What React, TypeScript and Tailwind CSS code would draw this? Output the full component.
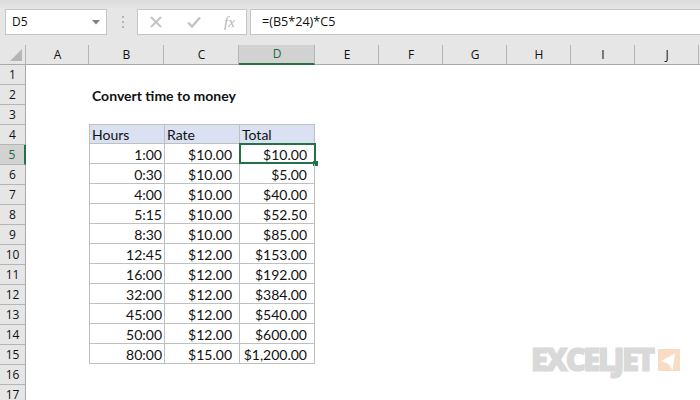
const cols = ["A", "B", "C", "D", "E", "F", "G", "H", "I", "J"];
const widths = ["w-[63px]", "w-[75px]", "w-[75px]", "w-[76px]", "w-[64px]", "w-[64px]", "w-[64px]", "w-[64px]", "w-[64px]", "w-[64px]"];
const rows: string[][] = [
  ["1:00", "$10.00", "$10.00"],
  ["0:30", "$10.00", "$5.00"],
  ["4:00", "$10.00", "$40.00"],
  ["5:15", "$10.00", "$52.50"],
  ["8:30", "$10.00", "$85.00"],
  ["12:45", "$12.00", "$153.00"],
  ["16:00", "$12.00", "$192.00"],
  ["32:00", "$12.00", "$384.00"],
  ["45:00", "$12.00", "$540.00"],
  ["50:00", "$12.00", "$600.00"],
  ["80:00", "$15.00", "$1,200.00"],
];
const rowNums = Array.from({ length: 17 }, (_, i) => i + 1);

export default function App() {
  return (
    <div className="relative w-[700px] h-[400px] overflow-hidden bg-white font-['Lato','Liberation_Sans',sans-serif] text-[14px] text-[#111]">
      {/* Formula bar area */}
      <div className="h-[45px] bg-[#e6e6e6] bg-gradient-to-b from-[#dcdcdc] to-[#e6e6e6] bg-[length:100%_9px] bg-no-repeat font-['Open_Sans',sans-serif] text-[12px]">
        <div className="flex h-[35px] pt-[9px]">
          <div className="ml-[5px] w-[102px] h-[26px] bg-white border border-[#c6c6c6] flex items-center justify-between pl-[6px] pr-[6px]">
            <span>D5</span>
            <svg width="8" height="5" viewBox="0 0 8 5"><path d="M0 0h8L4 4.5z" fill="#7f7f7f" /></svg>
          </div>
          <div className="w-[30px] flex flex-col items-center justify-center gap-[3px] pl-[1px]">
            <span className="w-[2px] h-[2px] bg-[#b5b5b5]" />
            <span className="w-[2px] h-[2px] bg-[#b5b5b5]" />
            <span className="w-[2px] h-[2px] bg-[#b5b5b5]" />
          </div>
          <div className="w-[110px] h-[26px] bg-white border border-[#c6c6c6] flex items-center pl-[12px]">
            <svg width="12" height="12" viewBox="0 0 12 12"><path d="M1 1l10 10M11 1L1 11" stroke="#c4c4c4" strokeWidth="2" fill="none" /></svg>
            <svg className="ml-[25px]" width="14" height="12" viewBox="0 0 14 12"><path d="M1 6.5l4 4 8-9" stroke="#c4c4c4" strokeWidth="2.4" fill="none" /></svg>
            <span className="ml-[23px] font-['Liberation_Serif',serif] italic text-[15px] text-[#b4b4b4]">fx</span>
          </div>
          <div className="ml-[3px] flex-1 h-[26px] bg-white border-y border-l border-[#c6c6c6] flex items-center pl-[11px] text-[12.6px]">
            =(B5*24)*C5
          </div>
        </div>
      </div>

      {/* Column headers */}
      <div className="flex h-[20px] bg-[#e6e6e6] border-b border-[#a9a9a9] font-['Open_Sans',sans-serif] text-[12px]">
        <div className="w-[26px] border-r border-[#b5b5b5] relative">
          <svg className="absolute left-[10px] top-[4px]" width="12" height="12" viewBox="0 0 12 12"><path d="M12 0v12H0z" fill="#b5b5b5" /></svg>
        </div>
        {cols.map((c, i) => (
          <div
            key={c}
            className={`${widths[i]} shrink-0 flex items-center justify-center pl-[1px] leading-none border-r border-[#b5b5b5] ${
              c === "D" ? "bg-[#d2d2d2] text-[#1d6b41] border-b-2 border-b-[#217346] h-[20px]" : ""
            }`}
          >
            {c}
          </div>
        ))}
      </div>

      {/* Sheet */}
      <div className="flex">
        <div className="w-[26px] shrink-0 font-['Open_Sans',sans-serif] text-[12px]">
          {rowNums.map((n) => (
            <div
              key={n}
              className={`h-[20px] pt-[1px] flex items-center justify-center leading-none border-b border-[#b5b5b5] ${
                n === 5
                  ? "bg-[#d2d2d2] text-[#1d6b41] border-r-2 border-r-[#217346]"
                  : "bg-[#e6e6e6] border-r border-r-[#a9a9a9]"
              }`}
            >
              {n}
            </div>
          ))}
        </div>
        <div className="flex-1">
          <div className="h-[20px]" />
          <div className="h-[20px] pt-[1px] pl-[66px] flex items-center font-bold">Convert time to money</div>
          <div className="h-[20px]" />
          <div className="ml-[63px] w-[226px] -mt-px">
            <div className="flex h-[20px] bg-[#d9e1f2] border-y border-[#bfbfbf]">
              {["Hours", "Rate", "Total"].map((h, i) => (
                <div
                  key={h}
                  className={`${i === 2 ? "w-[76px] border-r" : "w-[75px]"} pl-[2px] pt-[1px] flex items-center border-l border-[#bfbfbf]`}
                >
                  {h}
                </div>
              ))}
            </div>
            {rows.map((r, ri) => (
              <div key={ri} className="flex h-[20px] border-b border-[#bfbfbf]">
                {r.map((v, ci) => (
                  <div
                    key={ci}
                    className={`relative ${ci === 2 ? "w-[76px] border-r" : "w-[75px]"} ${
                      ci === 0 ? "pr-[2px]" : "pr-[7px]"
                    } pt-[2px] flex items-center justify-end border-l border-[#bfbfbf]`}
                  >
                    {v}
                    {ri === 0 && ci === 2 && (
                      <span className="absolute -left-px -top-px w-[77px] h-[21px] border-2 border-[#217346]">
                        <span className="absolute -right-[4px] -bottom-[4px] w-[5px] h-[5px] bg-[#217346]" />
                      </span>
                    )}
                  </div>
                ))}
              </div>
            ))}
          </div>
        </div>
      </div>

      {/* Watermark logo */}
      <div className="absolute left-[531px] top-[340px] flex items-start gap-[3px]">
        <span className="w-[124px] whitespace-nowrap font-['Open_Sans',sans-serif] font-extrabold text-[31px] leading-[38px] tracking-[-2.4px] text-[#d9d9d9] [-webkit-text-stroke:1.2px_#d9d9d9]">EXCELJET</span>
        <svg width="22" height="22" viewBox="0 0 22 22" className="mt-[9px]">
          <rect width="22" height="22" fill="#f9dcc4" />
          <path d="M3 12L17 4.5L14.5 21L10 14.5z" fill="#fff" />
        </svg>
      </div>
    </div>
  );
}
